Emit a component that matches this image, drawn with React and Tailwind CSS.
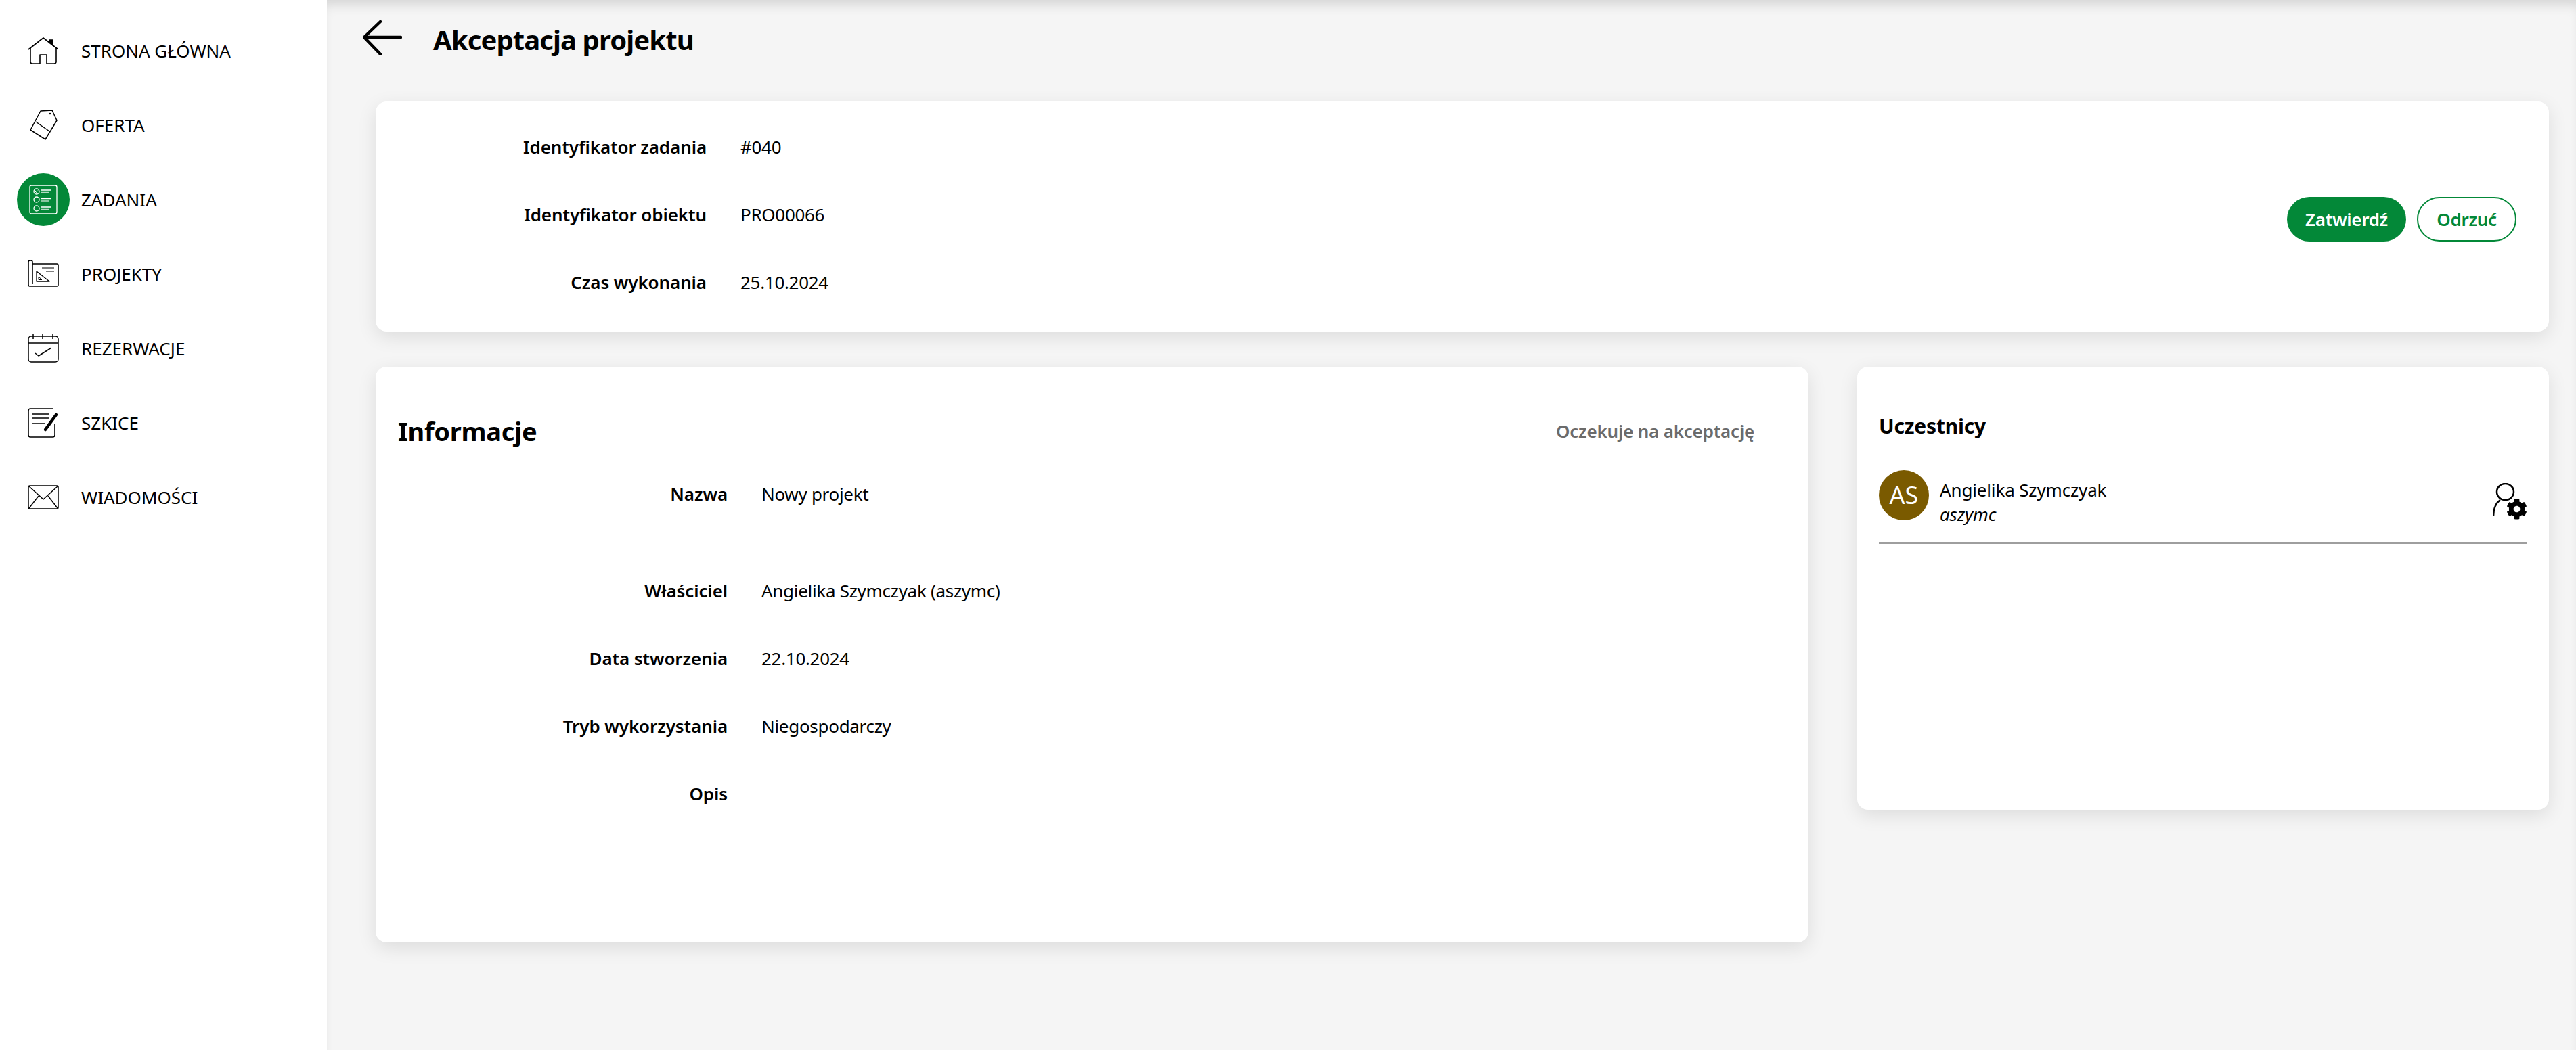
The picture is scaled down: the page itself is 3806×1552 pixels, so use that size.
import { FaCog } from "react-icons/fa";

const Home = () => (
  <svg viewBox="0 0 78 78" className="w-[78px] h-[78px]" fill="none" stroke="#000" strokeWidth="1.6" strokeLinejoin="round">
    <path d="M17 37 L39 20 L61 37" />
    <path d="M20 34 V55 Q20 58 23 58 H34 V45 H44 V58 H55 Q58 58 58 55 V34" />
    <path d="M48 23 H53 V31 L48 27 Z" fill="#000" />
  </svg>
);
const Tag = () => (
  <svg viewBox="0 0 78 78" className="w-[78px] h-[78px]" fill="none" stroke="#000" strokeWidth="1.5" strokeLinejoin="round">
    <path d="M35 18 L52 17 L59 32 L42 60 L20 46 Z" />
    <path d="M28 34 L48 48" />
    <circle cx="49" cy="22" r="0.6" fill="#000" />
  </svg>
);
const Tasks = () => (
  <svg viewBox="0 0 78 78" className="w-[78px] h-[78px]" fill="none" stroke="#fff" strokeWidth="1.3">
    <rect x="19" y="18" width="40" height="42" rx="2.5" />
    <circle cx="29" cy="27" r="4" />
    <circle cx="29" cy="39" r="4" />
    <circle cx="29" cy="52" r="4" />
    <path d="M27 27 L28.5 28.5 L31 25.5" strokeWidth="1" />
    <path d="M36 25 H51 M36 37.5 H51 M36 50 H51" />
    <path d="M36 28.5 H47 M36 41 H47 M36 53.5 H47" strokeOpacity="0.7" />
  </svg>
);
const Plans = () => (
  <svg viewBox="0 0 78 78" className="w-[78px] h-[78px]" fill="none" stroke="#000" strokeWidth="1.3" strokeLinejoin="round">
    <path d="M23 24 H59 Q61 24 61 26 V55 Q61 57 59 57 H19 Q17 57 17 55 V21 Q17 19 20 19 Q23 19 23 21 V54" strokeWidth="1.6" />
    <path d="M29 35 V50 H48 Z" />
    <path d="M32 43 V47.5 H37 Z" strokeWidth="1" />
    <path d="M37 30 H55 M43 35 H55 M43 40.5 H55" strokeWidth="1" />
  </svg>
);
const Calendar = () => (
  <svg viewBox="0 0 78 78" className="w-[78px] h-[78px]" fill="none" stroke="#000" strokeWidth="1.5" strokeLinejoin="round">
    <rect x="17" y="21" width="44" height="38" rx="4" />
    <path d="M17 31 H61" />
    <path d="M24 18 V25 M38 18 V25 M53 18 V25" />
    <path d="M27 46 L32 50 L51 38" />
  </svg>
);
const Draft = () => (
  <svg viewBox="0 0 78 78" className="w-[78px] h-[78px]" fill="none" stroke="#000" strokeWidth="1.6" strokeLinejoin="round">
    <path d="M53 18 H20 Q17 18 17 21 V57 Q17 60 20 60 H53 Q56 60 56 57 V40" />
    <path d="M22 26 H48 M22 32 H48 M22 40 H41" />
    <path d="M42 49 L58 27" strokeWidth="4.5" strokeLinecap="round" />
  </svg>
);
const Mail = () => (
  <svg viewBox="0 0 78 78" className="w-[78px] h-[78px]" fill="none" stroke="#000" strokeWidth="1.5" strokeLinejoin="round">
    <rect x="17" y="22" width="44" height="34" rx="2" />
    <path d="M18 23 L39 42 L60 23" />
    <path d="M18 55 L32 37 M60 55 L46 37" />
  </svg>
);

const nav = [
  ["STRONA GŁÓWNA", Home],
  ["OFERTA", Tag],
  ["ZADANIA", Tasks, true],
  ["PROJEKTY", Plans],
  ["REZERWACJE", Calendar],
  ["SZKICE", Draft],
  ["WIADOMOŚCI", Mail],
];

const Row = ({ label, value, w, extra = "" }) => (
  <div className={`flex h-[100px] items-center gap-[50px] ${extra}`}>
    <div className={`${w} text-right font-semibold tracking-[-0.1px]`}>{label}</div>
    <div className="tracking-[-0.3px]">{value}</div>
  </div>
);

export default function App() {
  return (
    <div className="flex min-h-[1552px] bg-[#f5f5f5] text-[26px] text-black [font-family:'Noto_Sans',sans-serif]">
      <aside className="w-[483px] shrink-0 bg-white pt-[20px]">
        {nav.map(([label, Icon, active]) => (
          <div key={label} className="flex h-[110px] items-center pl-[25px]">
            <div className={`flex h-[78px] w-[78px] items-center justify-center rounded-full ${active ? "bg-[#038838]" : ""}`}>
              <Icon />
            </div>
            <span className="ml-[17px]">{label}</span>
          </div>
        ))}
      </aside>
      <main className="flex-1 pr-[40px] shadow-[inset_0_14px_18px_-8px_rgba(0,0,0,0.14)]">
        <header className="flex h-[150px] items-start pl-[53px] pt-[30px]">
          <svg width="58" height="52" viewBox="0 0 58 52" fill="none" stroke="#000" strokeWidth="4.5" strokeLinecap="round" strokeLinejoin="round" className="shrink-0">
            <path d="M56 25 H2 M26 2 L2 25 L26 50" />
          </svg>
          <h1 className="ml-[46px] text-[40px] leading-[58px] font-bold tracking-[-0.9px]">Akceptacja projektu</h1>
        </header>
        <div className="ml-[72px]">
          <section className="flex h-[340px] items-center justify-between rounded-[16px] bg-white pr-[48px] shadow-[0_8px_28px_rgba(0,0,0,0.1)]">
            <div className="pb-[6px]">
              <Row label="Identyfikator zadania" value="#040" w="w-[489px]" />
              <Row label="Identyfikator obiektu" value="PRO00066" w="w-[489px]" />
              <Row label="Czas wykonania" value="25.10.2024" w="w-[489px]" />
            </div>
            <div className="mt-[8px] flex gap-[16px] font-semibold tracking-[-0.3px]">
              <button className="h-[66px] w-[176px] rounded-full bg-[#038838] text-white">Zatwierdź</button>
              <button className="h-[66px] w-[147px] rounded-full border-2 border-[#038838] bg-white text-[#038838]">Odrzuć</button>
            </div>
          </section>
          <div className="mt-[52px] flex items-start gap-[72px]">
            <section className="h-[851px] w-[2117px] shrink-0 rounded-[16px] bg-white pt-[65px] shadow-[0_8px_28px_rgba(0,0,0,0.1)]">
              <div className="flex h-[60px] items-center justify-between pl-[33px] pr-[80px]">
                <h2 className="text-[38px] font-bold tracking-[-0.3px]">Informacje</h2>
                <span className="font-semibold tracking-[-0.2px] text-[#6b6b6b]">Oczekuje na akceptację</span>
              </div>
              <div className="mt-[13px]">
                <Row label="Nazwa" value="Nowy projekt" w="w-[520px]" extra="mb-[43px]" />
                <Row label="Właściciel" value="Angielika Szymczyak (aszymc)" w="w-[520px]" />
                <Row label="Data stworzenia" value="22.10.2024" w="w-[520px]" />
                <Row label="Tryb wykorzystania" value="Niegospodarczy" w="w-[520px]" />
                <Row label="Opis" value="" w="w-[520px]" />
              </div>
            </section>
            <section className="h-[655px] flex-1 rounded-[16px] bg-white px-[32px] pt-[68px] shadow-[0_8px_28px_rgba(0,0,0,0.1)]">
              <h3 className="text-[30px] leading-[40px] font-bold tracking-[-0.2px]">Uczestnicy</h3>
              <div className="mt-[45px] flex h-[109px] items-start border-b-[3px] border-[#9e9e9e]">
                <div className="flex h-[74px] w-[74px] shrink-0 items-center justify-center rounded-full bg-[#7a5a00] text-[36px] text-white">AS</div>
                <div className="ml-[16px] leading-[36px] tracking-[-0.15px]">
                  <div className="mt-[11px]">Angielika Szymczyak</div>
                  <div className="italic">aszymc</div>
                </div>
                <div className="relative ml-auto mt-[19px] h-[54px] w-[51px] shrink-0">
                  <svg width="51" height="54" viewBox="0 0 51 54" fill="none" stroke="#000" strokeWidth="2.5" className="absolute inset-0">
                    <ellipse cx="18.5" cy="13" rx="12.5" ry="12" />
                    <path d="M1 49 Q1 32 11 25" />
                  </svg>
                  <FaCog className="absolute bottom-0 right-0 h-[31px] w-[31px] text-black" />
                </div>
              </div>
            </section>
          </div>
        </div>
      </main>
    </div>
  );
}
